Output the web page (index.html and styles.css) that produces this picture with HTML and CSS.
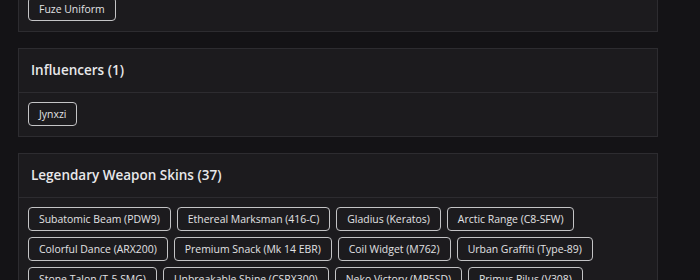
FILE: index.html
```html
<!DOCTYPE html>
<html lang="en">
<head>
  <meta charset="UTF-8" />
  <meta name="viewport" content="width=device-width, initial-scale=1.0" />
  <title>Account Items</title>
  <link rel="stylesheet" href="styles.css">
</head>
<body>

  <main class="page">

    <section class="card card-cut">
      <div class="card-body">
        <span class="chip">Fuze Uniform</span>
      </div>
    </section>

    <section class="card">
      <h2 class="card-head">Influencers (1)</h2>
      <div class="card-body">
        <span class="chip">Jynxzi</span>
      </div>
    </section>

    <section class="card">
      <h2 class="card-head">Legendary Weapon Skins (37)</h2>
      <div class="card-body">
        <span class="chip">Subatomic Beam (PDW9)</span>
        <span class="chip">Ethereal Marksman (416-C)</span>
        <span class="chip">Gladius (Keratos)</span>
        <span class="chip">Arctic Range (C8-SFW)</span>
        <span class="chip">Colorful Dance (ARX200)</span>
        <span class="chip">Premium Snack (Mk 14 EBR)</span>
        <span class="chip">Coil Widget (M762)</span>
        <span class="chip">Urban Graffiti (Type-89)</span>
        <span class="chip">Stone Talon (T-5 SMG)</span>
        <span class="chip">Unbreakable Shine (CSRX300)</span>
        <span class="chip">Neko Victory (MP5SD)</span>
        <span class="chip">Primus Pilus (V308)</span>
        <span class="chip">Golden Hour (Spear .308)</span>
        <span class="chip">Midnight Bloom (AUG A2)</span>
      </div>
    </section>

  </main>

</body>
</html>
```

FILE: styles.css
```css
html, body {
  margin: 0;
  padding: 0;
}

body {
  background: #141316;
  color: #e6e6e8;
  font-family: "Open Sans", "Liberation Sans", sans-serif;
  overflow: hidden;
}

.page {
  display: flex;
  flex-direction: column;
  gap: 16px;
  padding: 0 42px 0 18px;
  margin-top: -13px;
}

.card {
  background: #1c1b1e;
  border: 1px solid #2d2c30;
}

.card-head {
  margin: 0;
  padding: 12px 12px;
  line-height: 19px;
  font-size: 13.5px;
  font-weight: 600;
  color: #e8e8ea;
  border-bottom: 1px solid #2d2c30;
}

.card-body {
  display: flex;
  flex-wrap: wrap;
  gap: 6px;
  padding: 9px 9px 10px;
}

.chip {
  display: inline-block;
  padding: 0 10px;
  height: 22px;
  line-height: 22px;
  font-size: 10.45px;
  color: #e2e2e4;
  border: 1px solid #c4c4c6;
  border-radius: 4px;
  white-space: nowrap;
}
```
